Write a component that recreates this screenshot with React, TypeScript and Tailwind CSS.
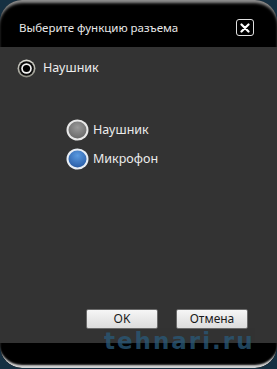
import React from "react";

const font = { fontFamily: '"Noto Sans", "Open Sans", "DejaVu Sans", sans-serif' };

function BigRadio() {
  return (
    <svg width="19" height="19" viewBox="0 0 19 19">
      <defs>
        <linearGradient id="rg1" x1="0" y1="0" x2="0" y2="1">
          <stop offset="0" stopColor="#e0e0d8" />
          <stop offset="1" stopColor="#8a8a80" />
        </linearGradient>
      </defs>
      <circle cx="9.5" cy="9.5" r="9" fill="url(#rg1)" />
      <circle cx="9.5" cy="9.5" r="7.3" fill="#0a0a0a" />
      <circle cx="9.5" cy="9.5" r="5.3" fill="#f2f2f2" />
      <circle cx="9.5" cy="9.5" r="3.6" fill="#000" />
    </svg>
  );
}

function GrayRadio() {
  return (
    <svg width="23" height="22" viewBox="0 0 23 22">
      <defs>
        <radialGradient id="gg" cx="0.5" cy="0.35" r="0.65">
          <stop offset="0" stopColor="#9a9a9a" />
          <stop offset="1" stopColor="#6a6a6a" />
        </radialGradient>
      </defs>
      <ellipse cx="11.5" cy="11" rx="11" ry="10.5" fill="#e8e8e8" />
      <ellipse cx="11.5" cy="11" rx="9" ry="8.5" fill="url(#gg)" />
    </svg>
  );
}

function BlueRadio() {
  return (
    <svg width="23" height="22" viewBox="0 0 23 22">
      <defs>
        <radialGradient id="bg" cx="0.5" cy="0.3" r="0.7">
          <stop offset="0" stopColor="#5a9ae0" />
          <stop offset="1" stopColor="#2a5ea8" />
        </radialGradient>
      </defs>
      <ellipse cx="11.5" cy="11" rx="11" ry="10.5" fill="#e8eef5" />
      <ellipse cx="11.5" cy="11" rx="9" ry="8.5" fill="url(#bg)" />
    </svg>
  );
}

export default function App() {
  return (
    <div className="w-[277px] h-[369px] bg-[#163042] overflow-hidden" style={font}>
      <div className="relative w-[277px] h-[368px] rounded-[22px] bg-black overflow-hidden flex flex-col shadow-[inset_0_4px_3px_-1px_rgba(190,190,190,0.75)]">
        <div className="h-[47px] shrink-0 flex items-start justify-between pl-[19px] pr-[23px] pt-[19px]">
          <span className="text-[11.5px] leading-[17px] text-[#e8e8e8]">Выберите функцию разъема</span>
          <div className="w-[18px] h-[17px] rounded-[3px] border border-[#e0e0e0] flex items-center justify-center">
            <svg width="10" height="10" viewBox="0 0 10 10">
              <path d="M1.5 1.5 L8.5 8.5 M8.5 1.5 L1.5 8.5" stroke="#fff" strokeWidth="2.2" strokeLinecap="round" />
            </svg>
          </div>
        </div>
        <div className="h-[296px] shrink-0 bg-[#333333] flex flex-col relative">
          <div className="flex items-center gap-[7px] pl-[17px] pt-[12px]">
            <BigRadio />
            <span className="text-[12.5px] text-[#ececec]">Наушник</span>
          </div>
          <div className="flex flex-col gap-[7px] pl-[66px] pt-[41px]">
            <div className="flex items-center gap-[4px]">
              <GrayRadio />
              <span className="text-[12.5px] text-[#ececec]">Наушник</span>
            </div>
            <div className="flex items-center gap-[4px]">
              <BlueRadio />
              <span className="text-[12.5px] text-[#ececec]">Микрофон</span>
            </div>
          </div>
          <div className="mt-auto mb-[14px] flex gap-[18px] pl-[86px]">
            <button className="w-[72px] h-[20px] border border-[#6a6a6a] rounded-[2px] bg-gradient-to-b from-[#f6f6f6] to-[#dcdcdc] text-[12px] leading-[18px] text-[#1a1a1a]">OK</button>
            <button className="w-[72px] h-[20px] border border-[#6a6a6a] rounded-[2px] bg-gradient-to-b from-[#f6f6f6] to-[#dcdcdc] text-[12px] leading-[18px] text-[#1a1a1a]">Отмена</button>
          </div>
        </div>
        <div className="flex-1 shadow-[inset_0_-5px_2px_-2px_rgba(235,235,235,0.9)] rounded-b-[22px]" />
        <div className="absolute left-[104px] top-[330px] text-[23px] font-bold text-[#2a5a7a] opacity-75 tracking-[2px] leading-none" style={{ fontFamily: '"DejaVu Sans", sans-serif' }}>
          tehnari.ru
        </div>
      </div>
    </div>
  );
}
